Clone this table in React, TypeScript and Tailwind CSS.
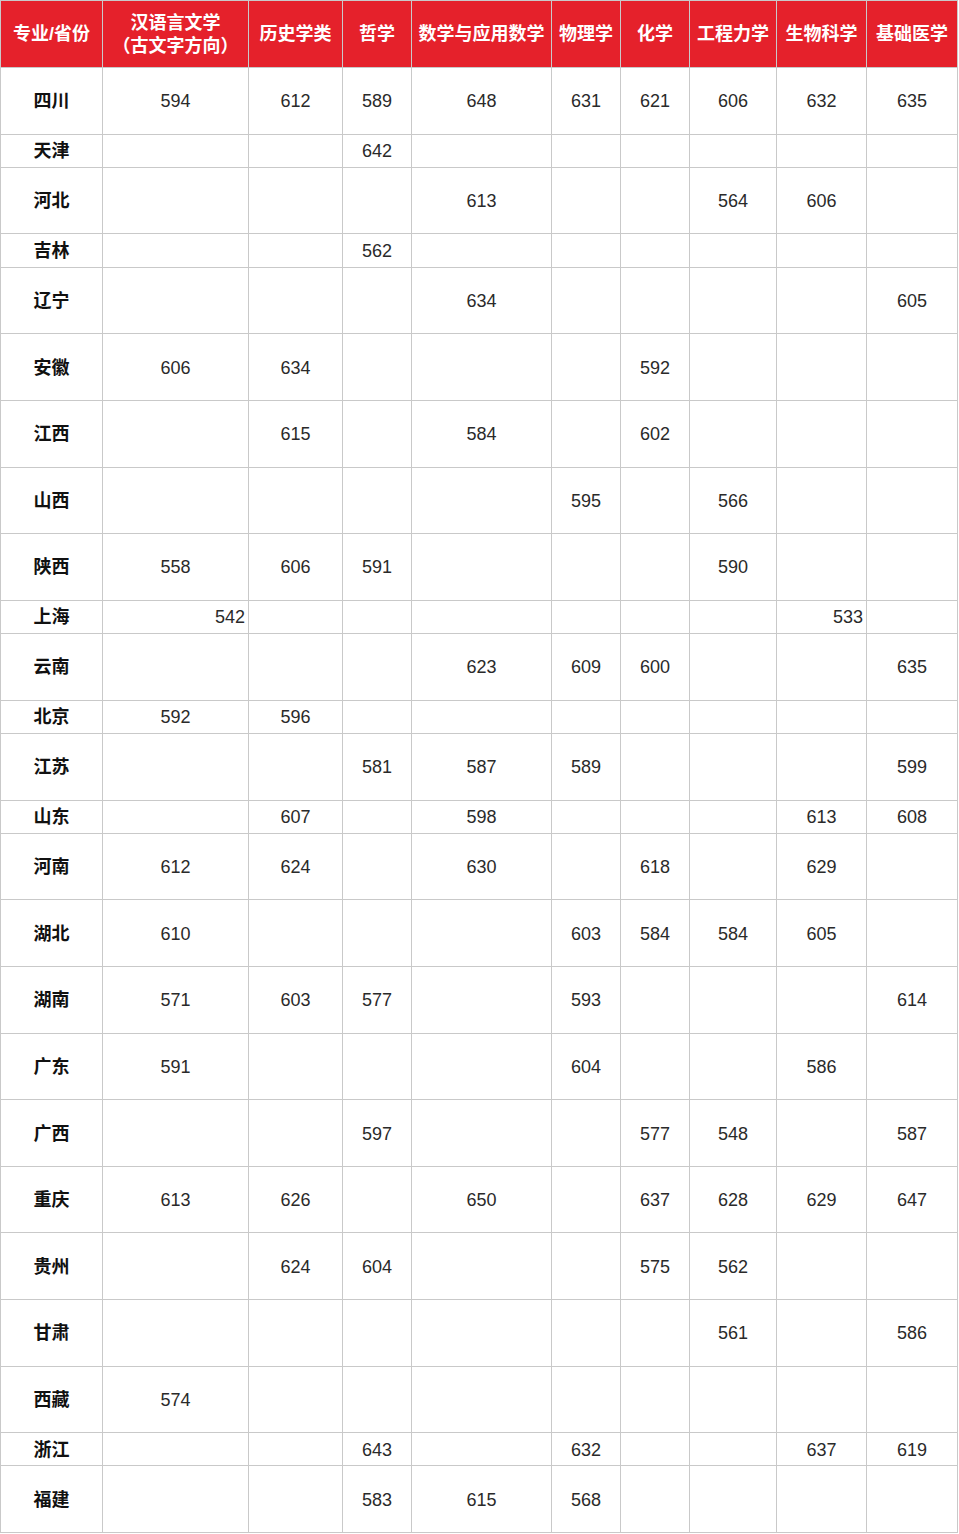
import React from "react";

const headers = [
  "专业/省份",
  "汉语言文学",
  "历史学类",
  "哲学",
  "数学与应用数学",
  "物理学",
  "化学",
  "工程力学",
  "生物科学",
  "基础医学",
];

type Row = { name: string; tall: boolean; vals: (string | null)[]; right?: number[] };

const _ = null;

const rows: Row[] = [
  { name: "四川", tall: true, vals: ["594", "612", "589", "648", "631", "621", "606", "632", "635"] },
  { name: "天津", tall: false, vals: [_, _, "642", _, _, _, _, _, _] },
  { name: "河北", tall: true, vals: [_, _, _, "613", _, _, "564", "606", _] },
  { name: "吉林", tall: false, vals: [_, _, "562", _, _, _, _, _, _] },
  { name: "辽宁", tall: true, vals: [_, _, _, "634", _, _, _, _, "605"] },
  { name: "安徽", tall: true, vals: ["606", "634", _, _, _, "592", _, _, _] },
  { name: "江西", tall: true, vals: [_, "615", _, "584", _, "602", _, _, _] },
  { name: "山西", tall: true, vals: [_, _, _, _, "595", _, "566", _, _] },
  { name: "陕西", tall: true, vals: ["558", "606", "591", _, _, _, "590", _, _] },
  { name: "上海", tall: false, vals: ["542", _, _, _, _, _, _, "533", _], right: [0, 7] },
  { name: "云南", tall: true, vals: [_, _, _, "623", "609", "600", _, _, "635"] },
  { name: "北京", tall: false, vals: ["592", "596", _, _, _, _, _, _, _] },
  { name: "江苏", tall: true, vals: [_, _, "581", "587", "589", _, _, _, "599"] },
  { name: "山东", tall: false, vals: [_, "607", _, "598", _, _, _, "613", "608"] },
  { name: "河南", tall: true, vals: ["612", "624", _, "630", _, "618", _, "629", _] },
  { name: "湖北", tall: true, vals: ["610", _, _, _, "603", "584", "584", "605", _] },
  { name: "湖南", tall: true, vals: ["571", "603", "577", _, "593", _, _, _, "614"] },
  { name: "广东", tall: true, vals: ["591", _, _, _, "604", _, _, "586", _] },
  { name: "广西", tall: true, vals: [_, _, "597", _, _, "577", "548", _, "587"] },
  { name: "重庆", tall: true, vals: ["613", "626", _, "650", _, "637", "628", "629", "647"] },
  { name: "贵州", tall: true, vals: [_, "624", "604", _, _, "575", "562", _, _] },
  { name: "甘肃", tall: true, vals: [_, _, _, _, _, _, "561", _, "586"] },
  { name: "西藏", tall: true, vals: ["574", _, _, _, _, _, _, _, _] },
  { name: "浙江", tall: false, vals: [_, _, "643", _, "632", _, _, "637", "619"] },
  { name: "福建", tall: true, vals: [_, _, "583", "615", "568", _, _, _, _] },
];

const cols = "grid grid-cols-[102px_146px_94px_69px_140px_69px_69px_87px_90px_91px]";

export default function App() {
  return (
    <div
      className="bg-white w-[959px] min-h-[1534px]"
      style={{ fontFamily: '"Liberation Sans", "Noto Sans CJK SC", Arial, sans-serif' }}
    >
      <div className="w-[958px] border-l border-t border-[#c9c9c9]">
        <div className={`${cols} h-[67px] bg-[#e5212b]`}>
          {headers.map((h, i) => (
            <div
              key={h}
              className="flex flex-col items-center justify-center pt-[1px] border-r border-b border-[#c9c9c9] text-white font-bold text-[18px] leading-[23px] whitespace-nowrap"
            >
              {i === 1 ? (
                <>
                  <span>汉语言文学</span>
                  <span>（古文字方向）</span>
                </>
              ) : (
                <span>{h}</span>
              )}
            </div>
          ))}
        </div>

        {rows.map((r) => (
          <div key={r.name} className={`${cols} ${r.tall ? "h-[66.6px]" : "h-[33.3px]"}`}>
            <div className="flex items-center justify-center pt-[2px] border-r border-b border-[#c9c9c9] font-bold text-[18px] text-[#111]">
              {r.name}
            </div>
            {r.vals.map((v, i) => (
              <div
                key={i}
                className={`flex items-center pt-[2px] border-r border-b border-[#c9c9c9] text-[18px] text-[#2a2a2a] ${
                  r.right && r.right.includes(i) ? "justify-end pr-[3px]" : "justify-center"
                }`}
              >
                {v}
              </div>
            ))}
          </div>
        ))}
      </div>
    </div>
  );
}
